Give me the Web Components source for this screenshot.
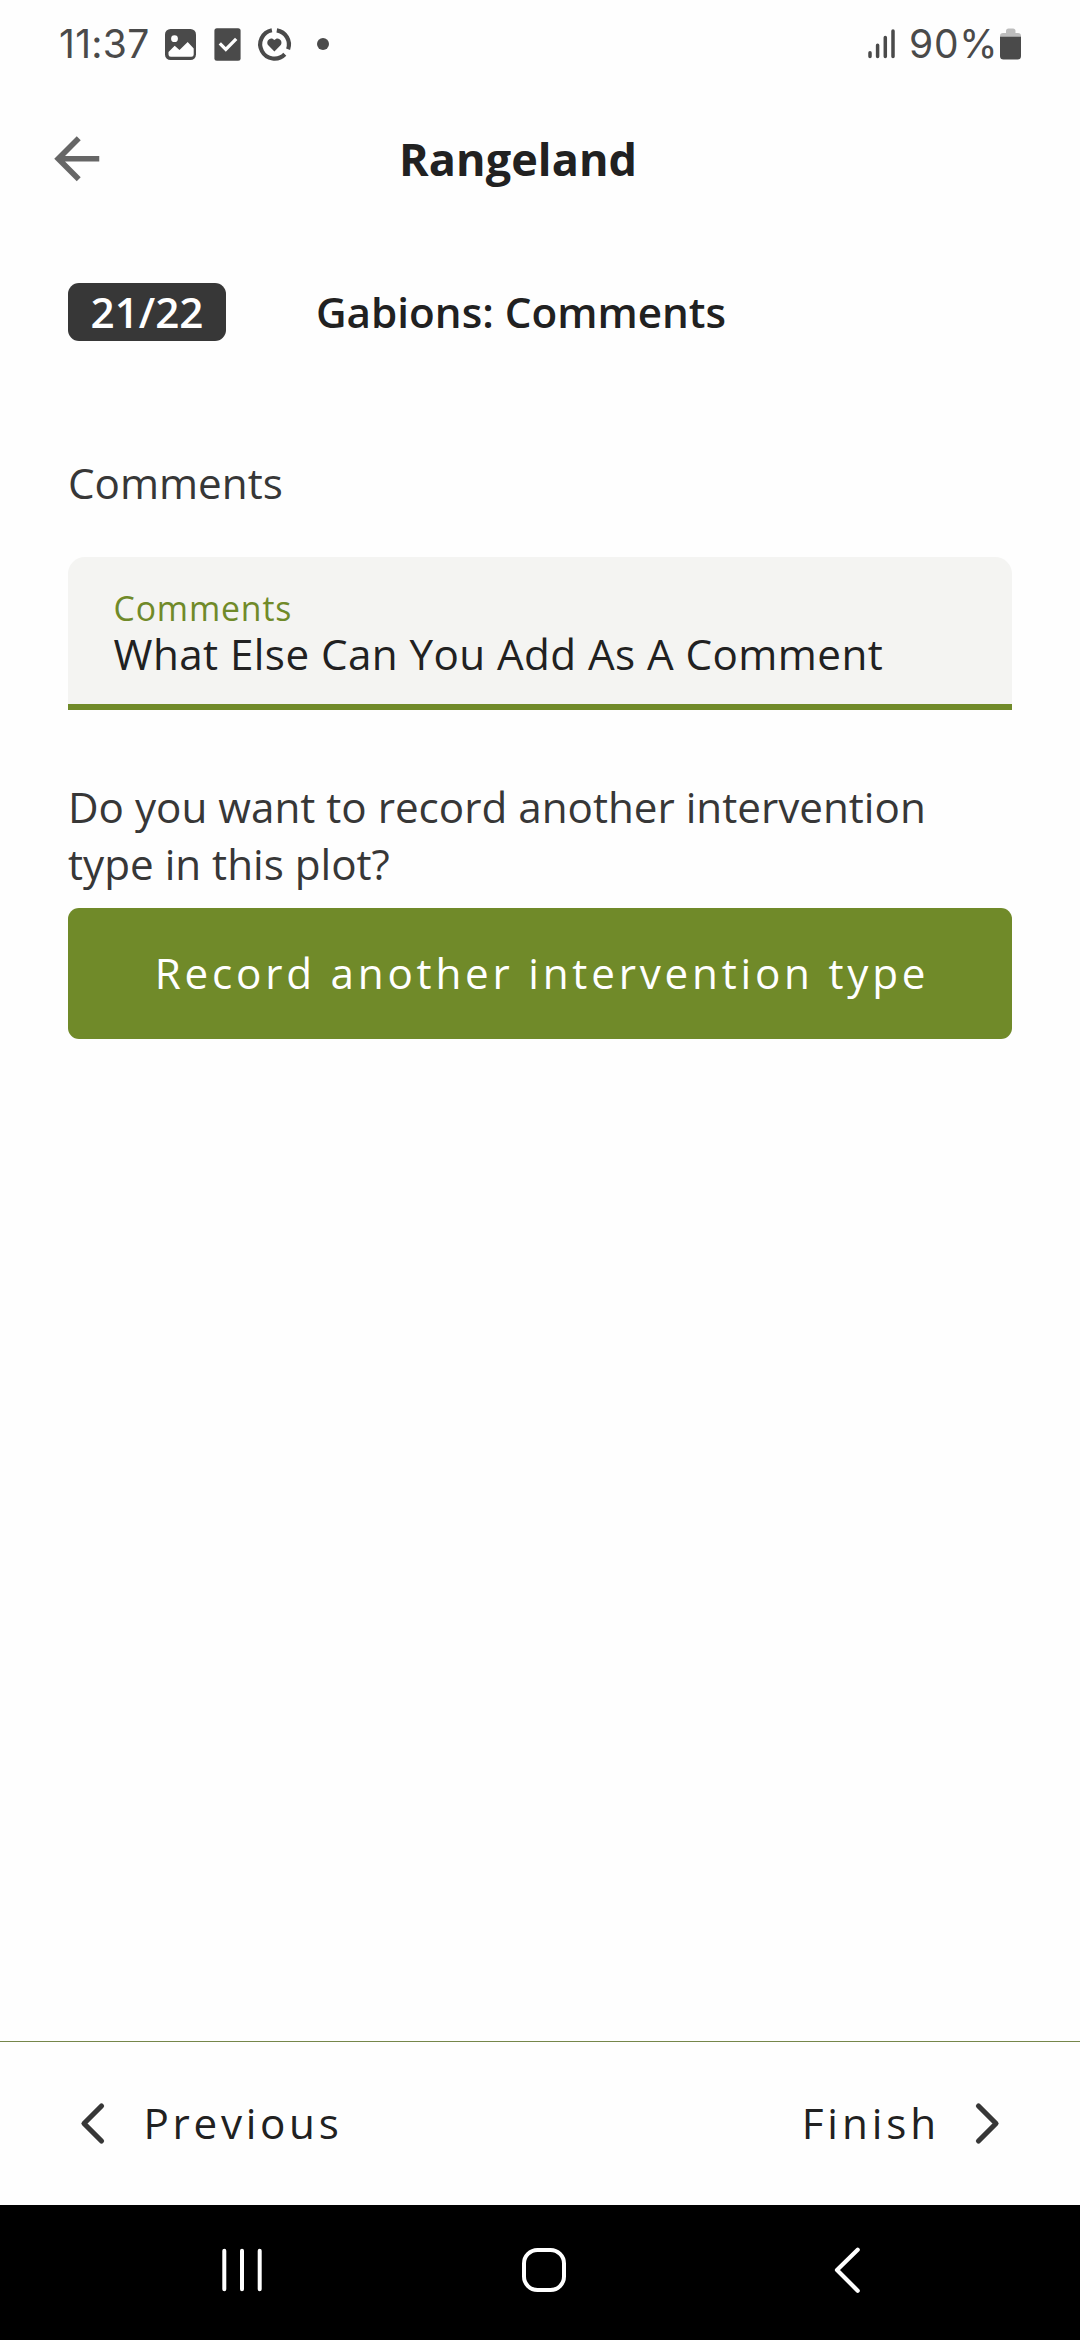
<!DOCTYPE html>
<html lang="en">
<head>
<meta charset="utf-8">
<title>Rangeland</title>
<style>
html,body{margin:0;padding:0}
body{width:1080px;height:2340px;overflow:hidden;background:#fefefe;font-family:"Open Sans","Noto Sans",sans-serif;font-size:42.19px;line-height:57px;color:#212121;--green:#708a29;--dark:#373737}
</style>
</head>
<body>
<survey-screen>
  <status-bar slot="top" time="11:37" battery="90%"></status-bar>
  <app-bar slot="top">Rangeland</app-bar>
  <step-header step="21/22">Gabions: Comments</step-header>
  <field-heading>Comments</field-heading>
  <text-field label="Comments">What Else Can You Add As A Comment</text-field>
  <follow-up>
    Do you want to record another intervention type in this plot?
    <primary-button slot="action">Record another intervention type</primary-button>
  </follow-up>
  <step-footer slot="bottom"><span slot="previous">Previous</span><span slot="next">Finish</span></step-footer>
  <system-nav slot="bottom"></system-nav>
</survey-screen>
<script>
const define = (name, html) => customElements.define(name, class extends HTMLElement {
  constructor() {
    super();
    const t = document.createElement('template');
    t.innerHTML = html;
    this.attachShadow({ mode: 'open' }).append(t.content.cloneNode(true));
  }
  connectedCallback() {
    this.shadowRoot.querySelectorAll('[data-attr]').forEach(n => {
      n.textContent = this.getAttribute(n.dataset.attr);
    });
  }
});

define('survey-screen', `<style>
  :host{display:flex;flex-direction:column;width:1080px;height:2340px}
  main{flex:1;padding:54px 68px 0}
  </style><slot name="top"></slot><main><slot></slot></main><slot name="bottom"></slot>`);

define('status-bar', `<style>
  :host{display:flex;justify-content:space-between;height:88px;box-sizing:border-box;padding:0 59px 0 59px;color:#4a4a4a;font:380 39px/88px Inter,Roboto,sans-serif}
  div{display:flex}
  svg{display:block;height:88px}
  .time{width:102px;letter-spacing:.3px}
  .pct{width:91px;letter-spacing:.7px}
  </style>
  <div><span class="time" data-attr="time"></span>
  <svg width="172" viewBox="161 0 172 88">
    <rect x="165" y="29" width="31" height="31" rx="5.5" fill="#4a4a4a"/>
    <circle cx="174.5" cy="38.7" r="3.4" fill="#fefefe"/>
    <path d="M168.500 52l6.200-6.200 4.800 4.300 8.200-8.200 6 6.500v6.100q0 2.300-2.300 2.300h-20.600q-2.300 0-2.300-2.300z" fill="#fefefe"/>
    <rect x="214.4" y="28.2" width="26.2" height="32.6" rx="2.5" fill="#4a4a4a"/>
    <path d="M219.800 43.400l6 6 10.400-10.600" fill="none" stroke="#fefefe" stroke-width="3.3"/>
    <g fill="none" stroke="#4a4a4a" stroke-width="4.2">
      <path d="M271.900 30.300A14.300 14.300 0 1 0 284.800 54.300"/>
      <path d="M276.800 30.300A14.300 14.300 0 0 1 288.100 49.200"/>
    </g>
    <path d="M274.400 51.400l-5.900-5.900c-3.800-4.300 2.300-9.900 5.900-5.500 3.600-4.400 9.700 1.200 5.900 5.500z" fill="#4a4a4a"/>
    <circle cx="323" cy="44" r="6" fill="#4a4a4a"/>
  </svg></div>
  <div>
  <svg width="42" viewBox="867 0 42 88"><path d="M870 52.800v3.700M877.600 45.200v11.300M885.300 37.600v18.900M893 31v25.500" stroke="#4a4a4a" stroke-width="3.5" stroke-linecap="round"/></svg>
  <span class="pct" data-attr="battery"></span>
  <svg width="21" viewBox="1000 0 21 88">
    <path d="M1000 38v-2q0-3 3-3h3v-2q0-2.500 2.500-2.500h4.500q2.500 0 2.500 2.500v2h2.500q3 0 3 3v2z" fill="#bdbdbd"/>
    <path d="M1000 36.700h21V56q0 3.500-3.500 3.500h-14q-3.500 0-3.500-3.500z" fill="#4a4a4a"/>
  </svg></div>`);

define('app-bar', `<style>
  :host{display:flex;align-items:center;height:141px;padding-left:43.3px;gap:288.200px;font-weight:700;font-size:45px;line-height:61px;letter-spacing:.08px}
  svg{width:67.5px;height:67.5px}
  </style><svg viewBox="0 0 24 24"><path d="M20 11H7.830l5.590-5.590L12 4l-8 8 8 8 1.410-1.410L7.830 13H20z" fill="#666"/></svg><span><slot></slot></span>`);

define('step-header', `<style>
  :host{display:flex;font-weight:600}
  b{display:flex;justify-content:center;width:158px;height:58px;margin-right:90px;border-radius:11px;background:var(--dark);color:#fff;font-weight:600}
  </style><b data-attr="step"></b><span><slot></slot></span>`);

define('field-heading', `<style>:host{display:block;margin-top:113px;color:var(--dark)}</style><slot></slot>`);

define('text-field', `<style>
  :host{display:flex;flex-direction:column;box-sizing:border-box;height:153px;margin-top:46px;padding:34px 45.500px 0;border-radius:17px 17px 0 0;
    background:linear-gradient(var(--green),var(--green)) bottom/100% 6px no-repeat #f4f4f2}
  label{font-size:33.750px;line-height:34px;letter-spacing:.87px;color:var(--green)}
  span{letter-spacing:.43px}
  </style><label data-attr="label"></label><span><slot></slot></span>`);

define('follow-up', `<style>
  :host{display:block;margin-top:68px;color:var(--dark)}
  p{margin:0 0 16px}
  </style><p><slot></slot></p><slot name="action"></slot>`);

define('primary-button', `<style>
  :host{display:flex;align-items:center;justify-content:center;height:131px;box-sizing:border-box;padding:0 0 3px 4px;border-radius:11px;background:var(--green);color:#fff;letter-spacing:3.780px}
  </style><span><slot></slot></span>`);

define('step-footer', `<style>
  :host{display:flex;justify-content:space-between;align-items:center;box-sizing:border-box;height:164px;padding:0 79px 2px;border-top:1px solid #75864a;letter-spacing:3.700px}
  div{display:flex;align-items:center}
  .n{letter-spacing:3.900px}
  svg{width:27px;height:44px}
  path{fill:none;stroke:#373737;stroke-width:5.200;stroke-linecap:round;stroke-linejoin:round}
  .p svg{margin-right:37.500px}.n svg{margin-left:34px}
  </style>
  <div class="p"><svg viewBox="0 0 27 44"><path d="M22.500 5L5 22.500 22.500 40"/></svg><slot name="previous"></slot></div>
  <div class="n"><slot name="next"></slot><svg viewBox="0 0 27 44"><path d="M4.500 5L22 22.500 4.500 40"/></svg></div>`);

define('system-nav', `<style>
  :host{display:flex;box-sizing:border-box;height:135px;padding:41px 219px 0;background:#000}
  svg{width:48px;height:48px;fill:none;stroke:#fff;stroke-width:4;stroke-linecap:round;stroke-linejoin:round}
  .home{margin:0 246px 0 252px}
  </style>
  <svg viewBox="219 2246 48 48"><path d="M224.300 2250.800v38.400M242 2250.800v38.400M259.700 2250.800v38.400"/></svg>
  <svg class="home" viewBox="519 2246 48 48"><rect x="524" y="2250" width="40" height="40" rx="13.500"/></svg>
  <svg viewBox="813 2246 48 48"><path stroke-width="4.200" d="M857.700 2249.800L837 2270l20.700 20.700"/></svg>`);
</script>
</body>
</html>
